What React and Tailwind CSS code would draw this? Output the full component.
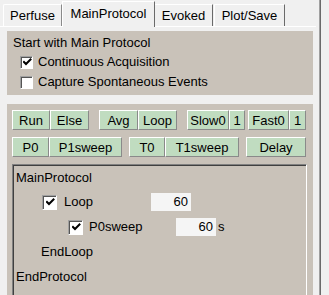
import React from "react";

const font = "font-['Liberation_Sans',Arial,sans-serif]";

function Check({ big }) {
  return (
    <div
      className={
        (big ? "w-[15px] h-[15px] " : "w-[13px] h-[13px] ") +
        "box-border bg-white border border-t-[#a0a0a0] border-l-[#a0a0a0] border-b-white border-r-white shadow-[inset_1px_1px_0_#555] flex items-center justify-center shrink-0"
      }
    >
      <svg width="9" height="9" viewBox="0 0 9 9" className="ml-[1px] mt-[1px]">
        <path d="M1 4 L3 6 L7.5 1.5" stroke="#000" strokeWidth="2" fill="none" strokeLinecap="square" />
      </svg>
    </div>
  );
}

function EmptyCheck() {
  return (
    <div className="w-[13px] h-[13px] box-border bg-white border border-t-[#a0a0a0] border-l-[#a0a0a0] border-b-white border-r-white shadow-[inset_1px_1px_0_#555] shrink-0" />
  );
}

function Btn({ w, children, className = "" }) {
  return (
    <div
      className={
        "h-[20px] box-border bg-[#c0dcc0] border border-t-white border-l-white border-b-[#8a8a8a] border-r-[#8a8a8a] flex items-center justify-center text-[13px] text-black leading-none shrink-0 " +
        w +
        " " +
        className
      }
    >
      {children}
    </div>
  );
}

export default function App() {
  return (
    <div className={"w-[329px] h-[295px] bg-[#f0f0f0] flex overflow-hidden text-black " + font}>
      <div className="w-[319px] shrink-0 flex flex-col">
        {/* tab strip */}
        <div className="h-[27px] w-[316px] border-b border-white flex items-end pl-[3px] box-border">
          <div className="w-[59px] h-[22px] box-border border-t border-l border-white border-r border-r-[#8a8a8a] flex items-center justify-center text-[13px] rounded-tl-[2px]">
            Perfuse
          </div>
          <div className="w-[93px] h-[26px] mb-[-1px] box-border border-t border-l border-white border-r border-r-[#6a6a6a] bg-[#f0f0f0] flex items-center justify-center text-[13px] pb-[2px] z-10">
            MainProtocol
          </div>
          <div className="w-[58px] h-[22px] box-border border-t border-white border-r border-r-[#6a6a6a] flex items-center justify-center text-[13px]">
            Evoked
          </div>
          <div className="w-[71px] h-[22px] ml-[1px] box-border border-t border-l border-white border-r border-r-[#6a6a6a] flex items-center justify-center text-[13px]">
            Plot/Save
          </div>
        </div>

        {/* top panel */}
        <div className="mt-[4px] ml-[7px] w-[306px] h-[64px] bg-[#c9c2b9] flex flex-col text-[13px] box-border pt-[4px]">
          <div className="pl-[6px] h-[15px] flex items-center">Start with Main Protocol</div>
          <div className="flex items-center pl-[13px] h-[20px] mt-[2px]">
            <Check />
            <span className="ml-[5px]">Continuous Acquisition</span>
          </div>
          <div className="flex items-center pl-[13px] h-[20px]">
            <EmptyCheck />
            <span className="ml-[5px]">Capture Spontaneous Events</span>
          </div>
        </div>

        {/* bottom panel */}
        <div className="mt-[9px] ml-[7px] w-[306px] flex-1 bg-[#c9c2b9] box-border pt-[6px] pl-[5px] flex flex-col">
          <div className="flex">
            <Btn w="w-[38px]">Run</Btn>
            <Btn w="w-[39px]">Else</Btn>
            <Btn w="w-[39px]" className="ml-[10px]">Avg</Btn>
            <Btn w="w-[39px]">Loop</Btn>
            <Btn w="w-[42px]" className="ml-[10px]">Slow0</Btn>
            <Btn w="w-[16px]">1</Btn>
            <Btn w="w-[41px]" className="ml-[3px]">Fast0</Btn>
            <Btn w="w-[17px]">1</Btn>
          </div>
          <div className="flex mt-[7px]">
            <Btn w="w-[37px]">P0</Btn>
            <Btn w="w-[73px]">P1sweep</Btn>
            <Btn w="w-[36px]" className="ml-[7px]">T0</Btn>
            <Btn w="w-[74px]">T1sweep</Btn>
            <Btn w="w-[60px]" className="ml-[7px]">Delay</Btn>
          </div>

          {/* list */}
          <div className="mt-[7px] w-[295px] flex-1 box-border border-t border-l border-t-[#808080] border-l-[#808080] border-r border-r-white shadow-[inset_1px_1px_0_#404040] pt-[1px] pl-[2px] text-[13px] flex flex-col">
            <div className="h-[24px] flex items-center pl-[1px]">MainProtocol</div>
            <div className="h-[24px] flex items-center pl-[27px]">
              <Check big />
              <span className="ml-[7px] w-[87px]">Loop</span>
              <div className="w-[40px] h-[18px] bg-[#f5f5f5] flex items-center justify-end pr-[3px]">60</div>
            </div>
            <div className="h-[26px] flex items-center pl-[53px]">
              <Check big />
              <span className="ml-[6px] w-[87px]">P0sweep</span>
              <div className="w-[40px] h-[18px] bg-[#f5f5f5] flex items-center justify-end pr-[3px]">60</div>
              <span className="ml-[2px]">s</span>
            </div>
            <div className="h-[24px] flex items-center pl-[26px]">EndLoop</div>
            <div className="h-[26px] flex items-center pl-[1px]">EndProtocol</div>
          </div>
        </div>
      </div>
      <div className="w-[1px] bg-[#a0a0a0]" />
      <div className="w-[1px] bg-[#6a6a6a]" />
    </div>
  );
}
